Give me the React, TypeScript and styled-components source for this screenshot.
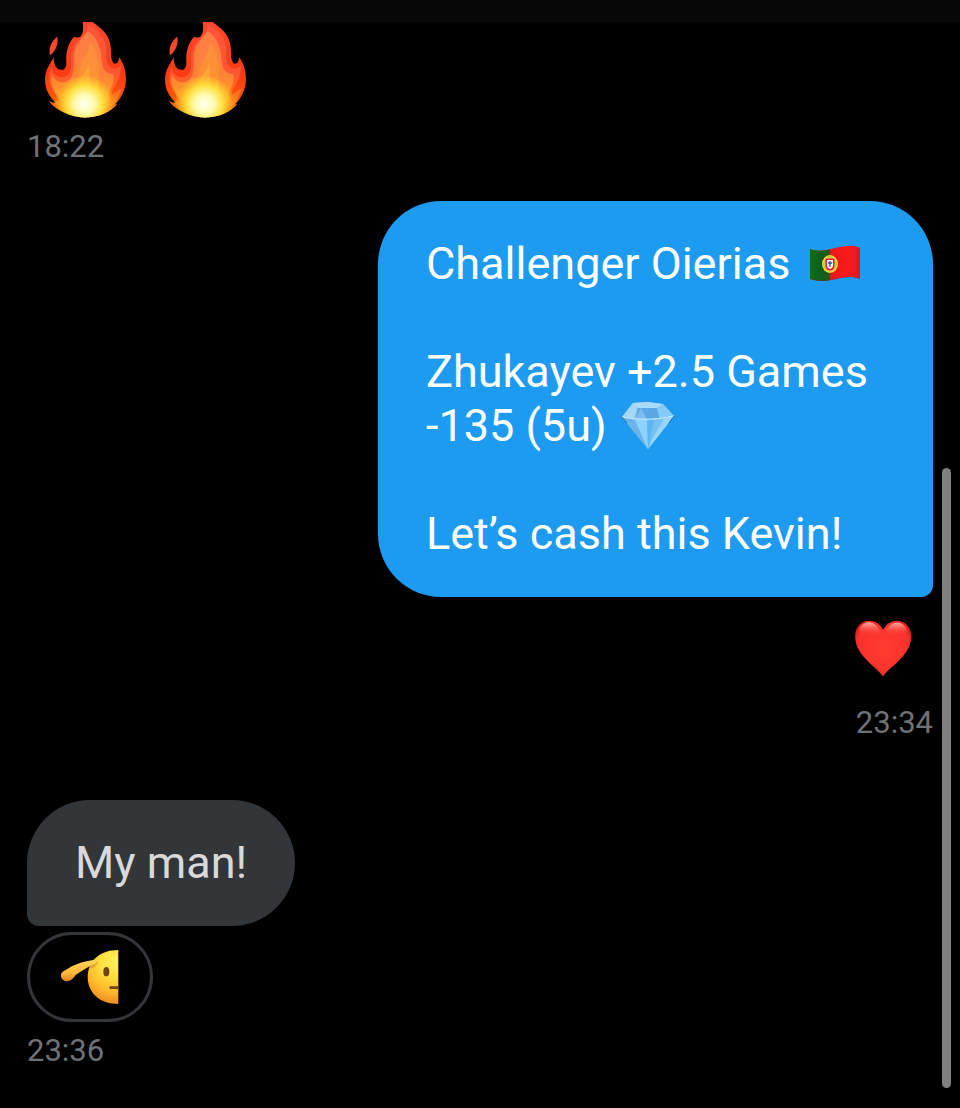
import React from 'react';
import styled, { createGlobalStyle } from 'styled-components';

const GlobalStyle = createGlobalStyle`
  * { box-sizing: border-box; }
  body { margin: 0; background: #000; }
`;

const Screen = styled.div`
  position: relative;
  min-height: 100vh;
  overflow: hidden;
  background: #000;
  font-family: Roboto, 'Liberation Sans', sans-serif;
`;

const TopBar = styled.header`
  position: relative;
  z-index: 1;
  height: 22px;
  background: #080707;
`;

const Thread = styled.main`
  display: flex;
  flex-direction: column;
  margin-top: -8px;
  padding: 0 27px 36px;
`;

const Message = styled.article<{ $mine?: boolean }>`
  display: flex;
  flex-direction: column;
  align-items: ${(p) => (p.$mine ? 'flex-end' : 'flex-start')};
  padding: ${(p) => (p.$mine ? '33px 0 56px' : '0')};
`;

const BigEmojiRow = styled.div`
  display: flex;
  gap: 37px;
  padding: 0 17px 8px;
`;

const Bubble = styled.p<{ $mine?: boolean }>`
  margin: 0;
  max-width: 555px;
  padding: 36px 48px;
  border-radius: ${(p) => (p.$mine ? '63px 63px 12px 63px' : '63px 63px 63px 12px')};
  background: ${(p) => (p.$mine ? '#1d9bf0' : '#333639')};
  color: ${(p) => (p.$mine ? '#fff' : '#d9d9d9')};
  font-size: 45px;
  line-height: 54px;
  white-space: pre-line;
`;

const InlineEmoji = styled.svg`
  width: 54px;
  height: 54px;
  margin-left: 4px;
  vertical-align: bottom;
`;

const HeartButton = styled.button`
  display: flex;
  margin: 23px 21px 25px 0;
  padding: 0;
  border: 0;
  background: none;
`;

const SaluteButton = styled.button`
  display: flex;
  align-items: center;
  justify-content: center;
  width: 126px;
  height: 90px;
  margin: 6px 0 8px;
  padding: 0;
  border: 3px solid #333639;
  border-radius: 45px;
  background: #000;
`;

const Time = styled.time`
  color: #6f7276;
  font-size: 31px;
  line-height: 42px;
`;

const ScrollThumb = styled.div`
  position: absolute;
  right: 9px;
  bottom: 20px;
  width: 9px;
  height: 56%;
  border-radius: 5px;
  background: #808080;
`;

const Fire = ({ id }: { id: string }) => (
  <svg width="83" height="104" viewBox="72 42 249 312" role="img" aria-label="fire">
    <defs>
      <linearGradient id={id + 'a'} x1="0" y1="0" x2="0" y2="1">
        <stop offset="0" stopColor="#ff4a30" />
        <stop offset=".6" stopColor="#f93a12" />
        <stop offset=".85" stopColor="#fd5e08" />
        <stop offset="1" stopColor="#ffb01c" />
      </linearGradient>
      <linearGradient id={id + 'b'} x1="0" y1="0" x2="0" y2="1">
        <stop offset="0" stopColor="#ff5a40" />
        <stop offset=".5" stopColor="#ff5a38" />
        <stop offset=".75" stopColor="#ff7a20" />
        <stop offset="1" stopColor="#ffb020" />
      </linearGradient>
      <linearGradient id={id + 'c'} x1="0" y1="0" x2="0" y2="1">
        <stop offset="0" stopColor="#ff8548" />
        <stop offset=".5" stopColor="#ff8a38" />
        <stop offset=".8" stopColor="#ffa526" />
        <stop offset="1" stopColor="#ffd630" />
      </linearGradient>
      <radialGradient id={id + 'd'} gradientUnits="userSpaceOnUse" cx="194" cy="312" r="92">
        <stop offset="0" stopColor="#fffff0" />
        <stop offset=".32" stopColor="#fffbb0" />
        <stop offset=".6" stopColor="#ffe640" stopOpacity=".9" />
        <stop offset="1" stopColor="#ffc020" stopOpacity="0" />
      </radialGradient>
      <clipPath id={id + 'e'}>
        <path d="M195 353C155 352 107 331 86 303Q96 309 107 309C88 290 75 268 75 238C76 208 90 194 101 172C102 192 106 206 120 209C132 212 140 203 139 185C137 150 147 125 163 110Q175 116 183 108C192 95 190 80 186 46C225 70 264 95 270 130C276 155 270 170 278 186C284 196 297 192 297 172C312 190 318 215 318 242C316 270 302 297 285 313L292 313C270 337 235 353 195 353Z" />
      </clipPath>
    </defs>
    <path d="M112 110C96 121 84 143 90 166C101 158 117 138 112 110Z" fill="#f8482c" />
    <g clipPath={`url(#${id}e)`}>
      <rect x="70" y="40" width="255" height="316" fill={`url(#${id}a)`} />
      <path d="M95 202Q98 228 122 232Q155 232 153 190C151 150 167 125 190 107Q204 94 202 72C246 98 262 125 258 160C257 196 274 218 302 198C305 245 270 265 278 282Q290 275 306 265L285 313L195 353L92 305Q114 306 114 294C91 263 78 240 95 202Z" fill={`url(#${id}b)`} opacity=".8" />
      <path d="M203 93C191 110 163 135 161 172C164 208 160 247 128 247Q105 246 95 222C91 258 105 280 122 300L195 353L270 300C263 264 285 260 279 222Q251 223 246 188C242 150 239 119 203 93Z" fill={`url(#${id}c)`} opacity=".85" />
      <path d="M208 125C213 160 181 172 178 218C174 253 154 270 130 267C133 304 158 330 195 353C235 330 263 297 255 250Q248 268 238 274C225 250 247 220 234 188C233 166 225 142 208 125Z" fill="#ffa230" opacity=".45" />
      <path d="M207 190C202 225 158 240 153 310L196 353L242 310C229 280 241 250 232 240Q224 260 216 263C204 245 211 215 207 190Z" fill="#ffc83b" opacity=".4" />
      <ellipse cx="194" cy="312" rx="92" ry="84" fill={`url(#${id}d)`} />
    </g>
  </svg>
);

const PortugalFlag = () => (
  <InlineEmoji viewBox="805 237 54 54" role="img" aria-label="flag of Portugal">
    <defs>
      <linearGradient id="flagShade" x1="0" y1="0" x2="1" y2="0">
        <stop offset="0" stopColor="#000" stopOpacity=".05" />
        <stop offset=".25" stopColor="#000" stopOpacity=".18" />
        <stop offset=".7" stopColor="#f00" stopOpacity=".08" />
        <stop offset="1" stopColor="#000" stopOpacity=".2" />
      </linearGradient>
      <clipPath id="flagShape">
        <path d="M809 249C822 254 835 246 847 246Q853 245 859 248V279C847 274 836 280 823 281Q815 281 809 279Z" />
      </clipPath>
    </defs>
    <g clipPath="url(#flagShape)">
      <path d="M808 242H863V285H808Z" fill="#fb1c20" />
      <path d="M808 242H829V285H808Z" fill="#13721f" />
      <path d="M808 242H863V285H808Z" fill="url(#flagShade)" />
      <path d="M809 279Q816 281 823 281C836 280 847 274 859 279" fill="none" stroke="#8d1620" strokeWidth="1" opacity=".6" />
    </g>
    <ellipse cx="829" cy="264" rx="8" ry="9" fill="#f5df26" />
    <ellipse cx="829" cy="264" rx="6" ry="7" fill="none" stroke="#8c9a20" strokeWidth="1" />
    <path d="M824 258H834V265C834 273 824 273 824 265Z" fill="#e52225" stroke="#fff3b0" strokeWidth=".7" />
    <path d="M826 260H832V265C832 270 826 270 826 265Z" fill="#fff" />
    <path d="M829 261V267M827 263H831" stroke="#3851a3" strokeWidth="1.4" />
  </InlineEmoji>
);

const Diamond = () => (
  <InlineEmoji viewBox="619 399 54 54" role="img" aria-label="gem">
    <path d="M630 403L645 402L660 404L671 416L645 449L619 417Z" fill="#83cdf8" />
    <path d="M630 403L634 407L631 418L619 417Z" fill="#a5d8f6" />
    <path d="M630 403L645 402L660 404L654 408H635Z" fill="#a9dcf6" />
    <path d="M635 408H654L657 419H632Z" fill="#5ba8e4" />
    <path d="M638 408L644 419H632Z" fill="#7dbcec" />
    <path d="M654 408L660 404L671 416L657 419Z" fill="#84caf5" />
    <path d="M619 417L632 420L645 449Z" fill="#6cb4e8" />
    <path d="M632 420H644L645 449Z" fill="#8fd2fa" />
    <path d="M644 420H657L645 449Z" fill="#5fb4f2" />
    <path d="M657 420L671 416L645 449Z" fill="#97d6f8" />
    <path d="M651 420L661 419L646 444Z" fill="#74c1f4" />
    <path d="M619 417Q645 422 671 416" fill="none" stroke="#c8ebfd" strokeWidth="1" />
    <path d="M619 417L624 423M671 416L666 423" stroke="#29689d" strokeWidth="1" />
  </InlineEmoji>
);

const Heart = () => (
  <svg width="58" height="57" viewBox="46 62 170 170" role="img" aria-label="red heart">
    <defs>
      <radialGradient id="heartFill" gradientUnits="userSpaceOnUse" cx="132" cy="146" r="104">
        <stop offset="0" stopColor="#ff3b30" />
        <stop offset=".75" stopColor="#fa322b" />
        <stop offset="1" stopColor="#d51511" />
      </radialGradient>
      <linearGradient id="heartShine" x1="0" y1="0" x2="0" y2="1">
        <stop offset="0" stopColor="#ffc4b8" stopOpacity=".9" />
        <stop offset="1" stopColor="#ff5044" stopOpacity="0" />
      </linearGradient>
    </defs>
    <path d="M131 231C118 206 48 170 48 112C48 82 66 64 90 64Q117 64 131 91Q146 64 173 64C198 64 215 83 215 112C215 170 144 206 131 231Z" fill="url(#heartFill)" />
    <path d="M58 104C60 58 112 56 123 102C110 112 76 98 58 104ZM139 102C150 56 202 60 205 104C187 98 153 112 139 102Z" fill="url(#heartShine)" />
  </svg>
);

const Salute = () => (
  <svg width="58" height="54" viewBox="125 90 174 162" role="img" aria-label="saluting face">
    <defs>
      <radialGradient id="faceFill" gradientUnits="userSpaceOnUse" cx="290" cy="125" r="130">
        <stop offset="0" stopColor="#fff25c" />
        <stop offset=".4" stopColor="#ffdc3c" />
        <stop offset=".7" stopColor="#fdb82c" />
        <stop offset="1" stopColor="#f08a1c" />
      </radialGradient>
      <linearGradient id="handFill" x1="0" y1="0" x2="0" y2="1">
        <stop offset="0" stopColor="#ffd85a" />
        <stop offset=".6" stopColor="#fdb83a" />
        <stop offset="1" stopColor="#de821c" />
      </linearGradient>
    </defs>
    <path d="M297 90V252C242 252 205 219 205 171C205 123 242 90 297 90Z" fill="url(#faceFill)" />
    <path d="M207 145Q221 149 237 128L226 121Z" fill="#ce8126" opacity=".5" />
    <path d="M125 169C122 157 137 151 149 144C171 130 202 123 222 120Q233 120 230 130C212 138 187 152 169 165Q157 184 140 184Q126 180 125 169Z" fill="url(#handFill)" />
    <ellipse cx="261" cy="155" rx="9" ry="14" fill="#704410" />
    <path d="M297 199H272Q267 203 272 207H297Z" fill="#704410" />
  </svg>
);

export default function App() {
  return (
    <Screen>
      <GlobalStyle />
      <TopBar />
      <Thread>
        <Message>
          <BigEmojiRow>
            <Fire id="fireOne" />
            <Fire id="fireTwo" />
          </BigEmojiRow>
          <Time>18:22</Time>
        </Message>
        <Message $mine>
          <Bubble $mine>
            Challenger Oierias <PortugalFlag />
            {'\n\nZhukayev +2.5 Games -135 (5u) '}
            <Diamond />
            {'\n\nLet’s cash this Kevin!'}
          </Bubble>
          <HeartButton type="button" aria-label="Heart reaction">
            <Heart />
          </HeartButton>
          <Time>23:34</Time>
        </Message>
        <Message>
          <Bubble>My man!</Bubble>
          <SaluteButton type="button" aria-label="Salute reaction">
            <Salute />
          </SaluteButton>
          <Time>23:36</Time>
        </Message>
      </Thread>
      <ScrollThumb />
    </Screen>
  );
}
